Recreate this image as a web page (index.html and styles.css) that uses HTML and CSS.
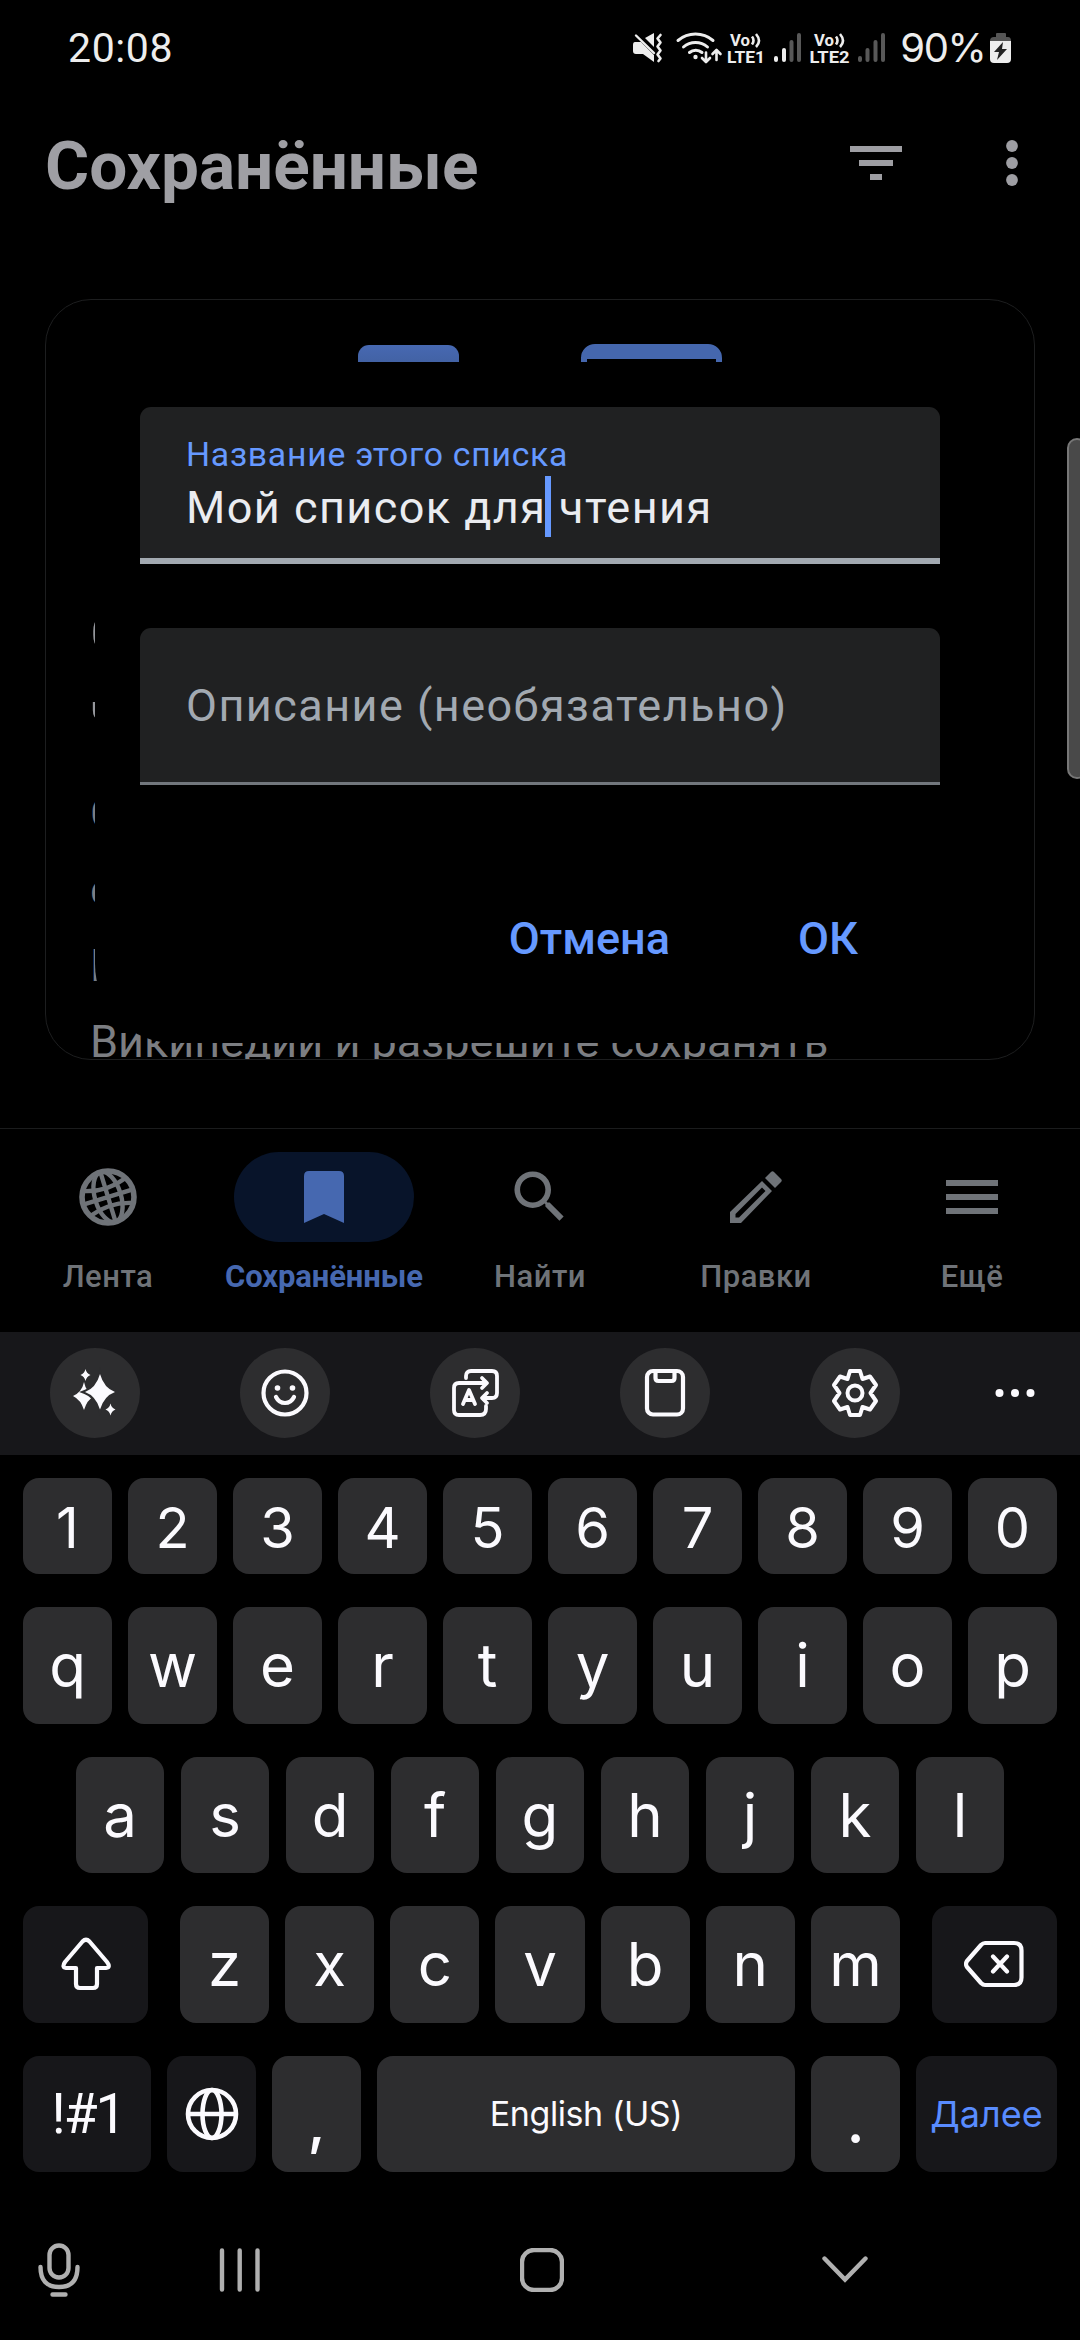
FILE: index.html
```html
<!DOCTYPE html>
<html lang="ru">
<head>
<meta charset="utf-8">
<title>Сохранённые</title>
<link rel="stylesheet" href="styles.css">
</head>
<body>
<div class="screen">
  <header class="status">
    <span class="clock">20:08</span>
    <svg class="status-icons" width="268" height="40" viewBox="632 28 268 40">
      <g fill="#ededed">
        <path d="M636 42h6l13 13v7l-11-8h-7q-3 0-3-3v-6q0-3 2-3z"/>
        <path d="M646 38l9-5v14z"/>
      </g>
      <g fill="none" stroke="#ededed" stroke-width="3" stroke-linecap="round" stroke-linejoin="round">
        <path d="M637 35.500l18 17.500" stroke-width="2.400"/>
        <path d="M661.500 35l-3 3.500 3 4-3 4 3 4-3 4 3 4-2 2.500" stroke-width="2.600"/>
        <path d="M679 40.500a27 27 0 0 1 35 0M684.500 47a18 18 0 0 1 24 0M690.500 52.500a9.500 9.500 0 0 1 12.500 0"/>
        <path d="M707 52.500v9M703 58l4 4 4-4M717.500 60v-9M713.500 54l4-4 4 4" stroke-width="2.600"/>
      </g>
      <circle cx="696.500" cy="57" r="2.200" fill="#ededed"/>
      <g class="lte">
        <text x="731" y="45.500" textLength="20" lengthAdjust="spacingAndGlyphs">Vo</text>
        <text x="728" y="63" textLength="38" lengthAdjust="spacingAndGlyphs">LTE1</text>
        <text x="815" y="45.500" textLength="20" lengthAdjust="spacingAndGlyphs">Vo</text>
        <text x="810.500" y="63" textLength="40" lengthAdjust="spacingAndGlyphs">LTE2</text>
      </g>
      <path d="M753 36.500q3 4 0 8M757 34q6 7 0 13M837 36.500q3 4 0 8M841 34q6 7 0 13" fill="none" stroke="#ededed" stroke-width="2.600"/>
      <g stroke-width="4" stroke-linecap="round">
        <path d="M777 58v2M785 50v10" stroke="#ededed"/>
        <path d="M792.500 42v18M800 35v25M861 58v2M868.500 50v10M876.500 42v18M884 35v25" stroke="#585858"/>
      </g>
    </svg>
    <span class="percent">90%</span>
    <svg width="22" height="32" viewBox="0 0 22 32">
      <path d="M6 2q0-1 1-1h8q1 0 1 1v3h2q3 0 3 4H0q0-4 4-4h2z" fill="#555"/>
      <path d="M0 9h21v18q0 4-4 4H4q-4 0-4-4z" fill="#ededed"/>
      <path d="M13 10L4 20h5l-2 8 10-11h-5z" fill="#222"/>
    </svg>
  </header>

  <div class="appbar">
    <h1>Сохранённые</h1>
    <svg width="52" height="34" viewBox="0 0 52 34" fill="#9e9ea3"><path d="M0 0h52v6H0zM9 14h34v6H9zM20 28h12v6H20z"/></svg>
    <svg class="more" width="12" height="46" viewBox="0 0 12 46" fill="#9e9ea3"><circle cx="6" cy="6" r="5.900"/><circle cx="6" cy="23" r="5.900"/><circle cx="6" cy="40" r="5.900"/></svg>
  </div>

  <main class="content">
    <section class="card">
      <div class="art"><i class="art-left"></i><i class="art-right"></i></div>
      <h2>Синхронизация<br>чтения</h2>
      <p>Списки<br>синхронизируются<br>Войдите<br>Википедии и разрешите сохранять</p>
    </section>
  </main>

  <nav class="tabs">
    <a class="tab"><span class="pill"><svg width="68" height="68" viewBox="-34 -34 68 68" fill="none" stroke="#6f7378" stroke-width="4.400"><circle r="26" stroke-width="5.600"/><g transform="rotate(-17)"><ellipse rx="13" ry="26"/><path d="M0-26V26M-26 0H26M-22-13Q0-5 22-13M-22 13Q0 5 22 13"/></g></svg></span>Лента</a>
    <a class="tab active"><span class="pill"><svg width="40" height="52" viewBox="0 0 40 52" fill="#4668b0"><path d="M0 52V5q0-5 5-5h30q5 0 5 5v47l-20-9z"/></svg></span>Сохранённые</a>
    <a class="tab"><span class="pill"><svg width="67.500" height="67.500" viewBox="0 0 24 24" fill="#6f7378"><path d="M15.500 14h-.79l-.28-.27A6.471 6.471 0 0 0 16 9.500 6.500 6.500 0 1 0 9.500 16c1.610 0 3.090-.59 4.230-1.570l.27.28v.79l5 4.990L20.490 19l-4.990-5zm-6 0C7.010 14 5 11.990 5 9.500S7.010 5 9.500 5 14 7.010 14 9.500 11.990 14 9.500 14z"/></svg></span>Найти</a>
    <a class="tab"><span class="pill"><svg width="52" height="52" viewBox="0 0 52 52" fill="#6f7378"><path fill-rule="evenodd" d="M0 52V41L32 10l10 10L11 52zM5.500 46.500h3.500L35.500 20l-3.500-3.500L5.500 43z"/><path d="M35 7l6-6q1.500-1.500 3 0l7 7q1.500 1.500 0 3l-6 6z"/></svg></span>Правки</a>
    <a class="tab"><span class="pill"><svg width="52" height="34" viewBox="0 0 52 34" fill="#6f7378"><path d="M0 0h52v6H0zM0 14h52v6H0zM0 28h52v6H0z"/></svg></span>Ещё</a>
  </nav>

  <div class="tools">
    <span class="tool"><svg width="48" height="54" viewBox="0 0 48 54" fill="#fbfafe"><path d="M13 16q2 10 10 14-7 4-10 14-3-10-11-14 9-4 11-14z"/><path d="M29 8q4 14 15 18-11 4-15 17.500-4-13.500-15-17.500 11-4 15-18z" stroke="#2d2d2f" stroke-width="4" paint-order="stroke"/><path d="M14.500 3q1 4.500 5 6-4 1.500-5 6-1-4.500-5-6 4-1.500 5-6zM39.500 37.500q1 4.500 5 6-4 1.500-5 6-1-4.500-5-6 4-1.500 5-6z"/></svg></span>
    <span class="tool"><svg width="50" height="50" viewBox="-25 -25 50 50" fill="none" stroke="#fbfafe" stroke-width="4.200" stroke-linecap="round"><circle r="21.500"/><path d="M-9 4q3 6 9 6t9-6"/><g fill="#fbfafe" stroke="none"><circle cx="-7.500" cy="-5" r="2.800"/><circle cx="7.500" cy="-5" r="2.800"/></g></svg></span>
    <span class="tool"><svg width="50" height="50" viewBox="0 0 50 50" fill="none" stroke="#fbfafe" stroke-width="3.800" stroke-linecap="round" stroke-linejoin="round"><path d="M36 15H9q-5 0-5 5v22q0 5 5 5h21q6 0 6-6v-3M16 10V8q0-5 5-5h21q5 0 5 5v17q0 5-5 5H33M32 10l5 5-5 5M37 25l-5 5 5 5M13 36l6-14 6 14M15 32h8"/></svg></span>
    <span class="tool"><svg width="42" height="50" viewBox="0 0 42 50" fill="none" stroke="#fbfafe" stroke-width="4.200" stroke-linejoin="round"><rect x="3" y="3" width="36" height="43.500" rx="6"/><path d="M11.500 3v7q0 3 3 3h13q3 0 3-3V3"/></svg></span>
    <span class="tool"><svg width="50" height="50" viewBox="-25 -25 50 50" fill="none" stroke="#fbfafe" stroke-width="4" stroke-linejoin="round"><circle r="7.500"/><path d="M-5-22H5L7.500-14 15-16.500 21-8 15.500 0 21 8 15 16.500 7.500 14 5 22H-5L-7.500 14-15 16.500-21 8-15.500 0-21-8-15-16.500-7.500-14z"/></svg></span>
    <span class="tool plain"><svg width="40" height="10" viewBox="0 0 40 10" fill="#fbfafe"><circle cx="4.500" cy="5" r="4"/><circle cx="20" cy="5" r="4"/><circle cx="35.500" cy="5" r="4"/></svg></span>
  </div>

  <div class="keyboard">
    <div class="row digits"><b>1</b><b>2</b><b>3</b><b>4</b><b>5</b><b>6</b><b>7</b><b>8</b><b>9</b><b>0</b></div>
    <div class="row"><b>q</b><b>w</b><b>e</b><b>r</b><b>t</b><b>y</b><b>u</b><b>i</b><b>o</b><b>p</b></div>
    <div class="row middle"><b>a</b><b>s</b><b>d</b><b>f</b><b>g</b><b>h</b><b>j</b><b>k</b><b>l</b></div>
    <div class="row lower">
      <b class="dark shift"><svg width="50" height="54" viewBox="0 0 50 54" fill="none" stroke="#fbfafe" stroke-width="4.200" stroke-linejoin="round"><path d="M21.500 4.500q3.500-3.500 7 0L46 25q4 5.500-1 6H36v16q0 4-4 4H19q-4 0-4-4V31H5q-4.500-.5-1-6z"/></svg></b>
      <b>z</b><b>x</b><b>c</b><b>v</b><b>b</b><b>n</b><b>m</b>
      <b class="dark back"><svg width="60" height="48" viewBox="0 0 60 48" fill="none" stroke="#fbfafe" stroke-width="4.200" stroke-linecap="round" stroke-linejoin="round"><path d="M21 3h29q7.500 0 7.500 7.500v27q0 7.500-7.500 7.500H21q-2 0-4-2L3 27q-2-3 0-6L17 5q2-2 4-2zM29 16.500l14 15M43 16.500l-14 15"/></svg></b>
    </div>
    <div class="row bottom">
      <b class="dark symbols">!#1</b>
      <b class="dark"><svg width="54" height="54" viewBox="-27 -27 54 54" fill="none" stroke="#fbfafe" stroke-width="4.600"><circle r="24"/><ellipse rx="9.500" ry="24"/><path d="M-24 0h48"/></svg></b>
      <b class="punct">,</b>
      <b class="space">English (US)</b>
      <b class="punct">.</b>
      <b class="dark next">Далее</b>
    </div>
  </div>

  <footer class="system">
    <svg width="42" height="54" viewBox="0 0 42 54"><rect x="11.500" y="2.500" width="19" height="32" rx="9.500"/><path d="M2.500 24q0 20 18.500 20T39.500 24M14.500 51.500h13"/></svg>
    <svg width="42" height="46" viewBox="0 0 42 46"><path d="M3 3.500v39M20.700 3.500v39M38.500 3.500v39"/></svg>
    <svg width="44" height="44" viewBox="0 0 44 44"><rect x="2" y="2" width="40" height="40" rx="12"/></svg>
    <svg width="46" height="28" viewBox="0 0 46 28"><path d="M2.500 2.500L23 23.500 43.500 2.500"/></svg>
  </footer>

  <div class="dialog">
    <div class="field focused"><label>Название этого списка</label><div class="value">Мой список для<i class="caret"></i> чтения</div></div>
    <div class="field"><div class="hint">Описание (необязательно)</div></div>
    <div class="actions"><span class="cancel">Отмена</span><span class="ok">ОК</span></div>
  </div>
  <div class="edge-handle"></div>
</div>
</body>
</html>
```
FILE: styles.css
```css
* { box-sizing: border-box; }
body { margin: 0; background: #000; font-family: Roboto, sans-serif; }
svg { display: block; flex: none; }
.screen { position: relative; width: 1080px; height: 2340px; overflow: hidden; background: #000; display: flex; flex-direction: column; }

.status { height: 96px; display: flex; align-items: center; padding: 0 68px; color: #ededed; font-size: 41px; line-height: 96px; }
.clock { width: 564px; letter-spacing: .6px; }
.percent { width: 91px; padding-left: 1px; font-family: Inter, sans-serif; font-size: 40px; letter-spacing: -1.300px; }
.lte text { font: 700 17px Roboto, sans-serif; fill: #ededed; }

.appbar { height: 203px; display: flex; align-items: flex-start; color: #9f9fa4; padding-left: 45px; }
.appbar h1 { margin: 30px 0 0; width: 805px; font-size: 67.500px; font-weight: 700; line-height: 80px; }
.appbar svg { margin-top: 50px; }
.appbar .more { margin: 44px 0 0 104px; }

.content { height: 829px; padding: 0 45px; }
.card { height: 761px; border: 1px solid #1d1e1f; border-radius: 46px; overflow: hidden; padding: 44px 0 0 44px; color: #7c7e82; }
.art { display: flex; height: 240px; padding-left: 268px; gap: 122px; align-items: flex-start; }
.art-left { width: 101px; height: 40px; margin-top: 1px; border-radius: 11px 11px 0 0; background: linear-gradient(#4769b2, #3c5892); }
.art-right { width: 141px; height: 40px; border: 6px solid #4567ae; border-top-width: 15px; border-radius: 14px 14px 0 0; }
.card h2 { margin: 11px 0 0; color: #95979c; font-size: 56px; font-weight: 400; line-height: 78px; white-space: nowrap; }
.card p { margin: 25px 0 0; font-size: 45px; line-height: 76px; white-space: nowrap; }

.tabs { height: 204px; display: flex; border-top: 1px solid #1b1c1d; }
.tab { flex: 1; display: flex; flex-direction: column; align-items: center; padding-top: 23px; color: #6f7378; font-size: 31px; font-weight: 500; line-height: 36px; letter-spacing: .5px; }
.pill { width: 180px; height: 90px; margin-bottom: 17px; border-radius: 45px; display: flex; align-items: center; justify-content: center; }
.active { color: #4668b0; font-weight: 700; letter-spacing: -.1px; }
.active .pill { background: #08142a; }

.tools { height: 123px; background: #17171a; display: flex; padding: 16px 20px 0 50px; gap: 100px; }
.tool { width: 90px; height: 90px; border-radius: 50%; background: #2d2d2f; display: flex; align-items: center; justify-content: center; flex: none; }
.tool.plain { background: none; margin-left: -30px; }

.keyboard { height: 718px; padding: 23px 23px 0; display: flex; flex-direction: column; gap: 33px; font-family: Inter, sans-serif; color: #fbfafe; }
.row { height: 116.500px; display: flex; gap: 16px; flex: none; }
.row b { flex: 1; min-width: 0; border-radius: 16px; background: #2d2d2f; font-size: 60px; font-weight: 400; display: flex; align-items: center; justify-content: center; line-height: 1; }
.digits { height: 96px; }
.row.digits b { font-size: 56px; padding-top: 3px; }
.middle { padding: 0 53px; gap: 17px; }
.row b.dark { background: #17171a; }
.row b.shift { flex: 0 0 125px; margin-right: 16px; }
.row b.back { flex: 0 0 125px; margin-left: 16px; }
.bottom b { flex: 0 0 89px !important; }
.row b.symbols { flex-basis: 128px !important; padding-left: 2px; font: 400 55px Roboto, sans-serif; letter-spacing: -2px; }
.row b.space { flex-basis: 418px !important; font-size: 34px; letter-spacing: -.4px; }
.row b.next { flex: 1 !important; font-size: 36px; color: #598cff; }
.row b.punct { padding-top: 14px; font-weight: 500; }

.system { flex: 1; display: flex; align-items: center; padding: 27px 0 0 38px; }
.system svg { fill: none; stroke: #b0b0b0; stroke-width: 4.400px; stroke-linecap: round; }
.system svg:nth-child(2) { margin-left: 139px; }
.system svg:nth-child(3) { margin-left: 259px; }
.system svg:nth-child(4) { margin-left: 258px; }

.dialog { position: absolute; left: 95px; top: 362px; width: 890px; height: 681px; border-radius: 0 0 79px 79px; background: #000; padding: 45px 45px 0; }
.field { height: 157px; padding: 0 46px; border-radius: 11px 11px 0 0; background: #202122; border-bottom: 3px solid #72777d; margin-top: 64px; font-size: 45px; letter-spacing: 1.450px; }
.focused { border-bottom: 6px solid #a2a9b1; margin-top: 0; padding-top: 28px; }
.field label { display: block; color: #69f; font-size: 33.750px; line-height: 40px; letter-spacing: .75px; }
.value { color: #eaecf0; line-height: 60px; margin-top: 3px; }
.caret { position: relative; }
.caret::after { content: ""; position: absolute; left: -1px; top: -5px; width: 6px; height: 61px; background: #69f; }
.hint { color: #a2a9b1; line-height: 155px; }
.actions { display: flex; justify-content: flex-end; gap: 128px; padding: 124px 82px 0 0; color: #69f; font-size: 45px; font-weight: 500; line-height: 60px; }
.edge-handle { position: absolute; left: 1067px; top: 438px; width: 20px; height: 341px; border: 2px solid #777; border-radius: 12px; background: #494949; }
```
